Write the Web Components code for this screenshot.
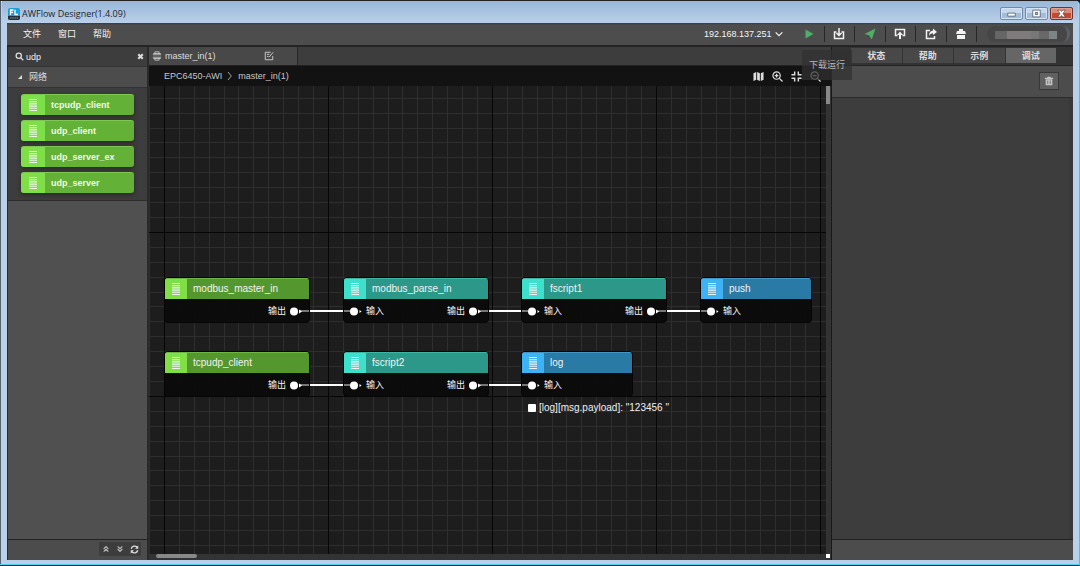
<!DOCTYPE html>
<html lang="zh-CN">
<head>
<meta charset="utf-8">
<title>AWFlow Designer(1.4.09)</title>
<style>
  html, body { margin: 0; height: 100%; background: #10171c; overflow: hidden; }
  body { font: 9px/14px "Liberation Sans", "Noto Sans CJK SC", sans-serif; color: #ddd;
    --bar: #4c4c4c; --panel: #3d3d3d; --line: #202020; }
</style>
</head>
<body>
<app-window heading="AWFlow Designer(1.4.09)">
  <menu-bar slot="menu"></menu-bar>
  <node-palette></node-palette>
  <flow-editor></flow-editor>
  <side-panel></side-panel>
</app-window>

<script>
const define = (name, html, init) => {
  const template = document.createElement('template');
  template.innerHTML = html;
  customElements.define(name, class extends HTMLElement {
    constructor() {
      super();
      this.attachShadow({ mode: 'open' }).append(template.content.cloneNode(true));
    }
    connectedCallback() { if (init) init(this, this.shadowRoot); }
  });
};

const reset = `
  *, *::before { box-sizing: border-box; }
  button, input, select { font: inherit; color: inherit; background: none; border: 0; margin: 0; padding: 0; border-radius: 0; outline: 0; }
  button { display: flex; align-items: center; justify-content: center; }
`;

const S = 'fill="none" stroke="currentColor"';
const icons = {
  logo: '<rect width="12" height="12" rx="2" fill="#1b9fdc"/><path d="M0 8h12v2a2 2 0 0 1-2 2H2a2 2 0 0 1-2-2z" fill="#22313c"/><path d="M2.500 7V2h3M2.500 4.300h2.500M7 1.700V6.500h3" fill="none" stroke="#fff" stroke-width="1.300"/><path d="M2 10h8" stroke="#8b99a3" stroke-dasharray="1.500 .7"/>',
  play: '<path d="M2.500 1.500v9l8-4.500z" fill="currentColor"/>',
  download: `<path d="M3.500 4H1.500v6.500h9V4h-2M6 0v7M3.500 5 6 7.500 8.500 5" ${S} stroke-width="1.500"/>`,
  plane: '<path d="M11.500.5.5 6l4.500 1.200L7.800 11.500z" fill="currentColor"/>',
  publish: `<path d="M3.500 7.500H1.500V1.500h9v6h-2" ${S} stroke-width="1.500"/><path d="M6 3.500 3 7h2v4h2V7h2z" fill="currentColor"/>`,
  share: `<path d="M5 2.500H1.500v8h8V8" ${S} stroke-width="1.500"/><path d="M8 .5 12 4 8 7V5.200C6 5.200 5 6 4 8c0-3.500 1.500-5.200 4-5.500z" fill="currentColor"/>`,
  store: '<path d="M4 1h4v2h2l1 3H1l1-3h2zM2 7h8v4H2z" fill="currentColor"/>',
  chevron: `<path d="M2 4l4 4 4-4" ${S} stroke-width="1.400"/>`,
  right: `<path d="M3 0l5 6-5 6" ${S} stroke-width="1.200"/>`,
  search: `<circle cx="5" cy="5" r="3.500" ${S} stroke-width="1.700"/><path d="M7.500 7.500l3.500 3.500" ${S} stroke-width="1.800"/>`,
  close: `<path d="M3 3l6 6M9 3l-6 6" ${S} stroke-width="2.800"/>`,
  caret: '<path d="M9 3v6H3z" fill="currentColor"/>',
  flow: `<path d="M3.500 3V1h5v2M3.500 9v2h5V9M1 4.500h10M1 7.500h10M1.500 3h9M1.500 9h9" ${S} stroke-width=".9"/>`,
  note: `<path d="M8 1.500H1.500v9h9V6M3.500 4h3M3.500 6.500h2M6 7.500l5-6" ${S}/>`,
  map: '<path d="M.5 2.500 3.500 1v8.500L.5 11zM4.500 1l3 1.500V11l-3-1.500zM8.500 2.500l3-1.500v8.500l-3 1.500z" fill="currentColor"/>',
  zoomin: `<circle cx="5" cy="5" r="4" ${S} stroke-width="1.300"/><path d="M8 8l3.500 3.500M3 5h4M5 3v4" ${S} stroke-width="1.400"/>`,
  zoomout: `<circle cx="5" cy="5" r="4" ${S} stroke-width="1.300"/><path d="M8 8l3.500 3.500M3 5h4" ${S} stroke-width="1.400"/>`,
  fit: `<path d="M4 .5V4H.5M8 .5V4h3.500M.5 8H4v3.500M11.500 8H8v3.500" ${S} stroke-width="1.600"/>`,
  trash: '<path d="M4 1h4v1h3v1.500H1V2h3zM2 4h8v7H2z" fill="currentColor"/><path d="M4.500 5.500v4M7.500 5.500v4" stroke="#666"/>',
  up: `<path d="M2.500 6 6 2.500 9.500 6M2.500 10 6 6.500 9.500 10" ${S} stroke-width="1.700"/>`,
  down: `<path d="M2.500 2 6 5.500 9.500 2M2.500 6 6 9.500 9.500 6" ${S} stroke-width="1.700"/>`,
  refresh: `<path d="M1.700 5A4.500 4.500 0 0 1 9.500 3M10.300 7A4.500 4.500 0 0 1 2.500 9" ${S} stroke-width="1.700"/><path d="M11 .5V5H6.800zM1 11.500V7h4.200z" fill="currentColor"/>`,
  lines: `<path d="M2 .5h8M2 2.700h8M2 4.900h8M2 7.100h8M2 9.300h8M2 11.500h8" ${S} stroke-width="1.100"/>`,
  min: '<path d="M1 5.500h10v4H1z" fill="#fff" stroke="#4a5666"/>',
  max: '<path d="M1 1.500h10v9H1z" fill="#fff" stroke="#4a5666"/><path d="M4.500 4.500h3v3h-3z" fill="#9fb6d0" stroke="#4a5666"/>',
  exit: '<path d="M1 1.500h3.500L6 3.300l1.500-1.800H11L8 6l3 4.500H7.500L6 8.700l-1.500 1.800H1L4 6z" fill="#fff" stroke="#5c3434" stroke-width=".8"/>',
};

define('ui-icon', `<style>
  :host { display: inline-block; width: 12px; height: 12px; flex: none; }
  svg { display: block; width: 100%; height: 100%; overflow: visible; }
</style><svg viewBox="0 0 12 12" aria-hidden="true"></svg>`,
(host, root) => { root.querySelector('svg').innerHTML = icons[host.getAttribute('name')] || ''; });

define('app-window', `<style>${reset}
  :host { display: flex; flex-direction: column; height: 100vh; box-sizing: border-box; padding: 0 6px 5px 7px;
    background: #b9d0ea; border: 1px solid #35c9e8; border-width: 1px 1px 1px 0; border-top-color: #222; border-bottom-color: #16323f;
    border-radius: 0 5px 0 0; box-shadow: inset 0 -1px #4ed0ee, inset 1px 0 #56636f, inset 0 1px #dfeaf6; }
  header { display: flex; align-items: center; flex: none; height: 22px; margin: 0 -5px; padding: 3px 5px 0 6px; gap: 2px;
    background: linear-gradient(#9ab7d7, #b9d0ea); color: #1c2530; font: 9px/16px "Open Sans", "Noto Sans", sans-serif; }
  h1 { font: inherit; margin: 0; flex: 1; }
  .controls { display: flex; gap: 2px; }
  .controls button { width: 23px; height: 13px; border: 1px solid #6f8ba9; border-radius: 2px;
    background: linear-gradient(#c5d7ea 50%, #a3bdd9 50%); box-shadow: inset 0 0 0 1px #d6e4f2; }
  .controls .exit { background: linear-gradient(#d98b7c 50%, #c24a30 50%); border-color: #6d3431; box-shadow: inset 0 0 0 1px #e0a094; }
  .controls ui-icon { width: 9px; height: 9px; }
  main { display: flex; flex: 1; min-height: 0; border-top: 2px solid #242424; background: #2a2a2a; }
  ::slotted(flow-editor) { flex: 1; min-width: 0; }
</style>
<header><ui-icon name="logo"></ui-icon><h1></h1>
  <div class="controls"><button aria-label="最小化"><ui-icon name="min"></ui-icon></button><button aria-label="最大化"><ui-icon name="max"></ui-icon></button><button class="exit" aria-label="关闭"><ui-icon name="exit"></ui-icon></button></div>
</header>
<slot name="menu"></slot>
<main><slot></slot></main>`,
(host, root) => { root.querySelector('h1').textContent = host.getAttribute('heading'); });

define('menu-bar', `<style>${reset}
  :host { display: flex; align-items: center; flex: none; height: 22px; background: linear-gradient(#3c3c3c, #4d4d4d 2px); padding: 0 3px 0 16px; color: #f2f2f2; }
  nav { display: flex; gap: 17px; flex: 1; }
  select { appearance: none; width: 70px; height: 16px; }
  label { display: flex; align-items: center; margin-right: 10px; color: #f4f4f4; }
  label ui-icon { width: 10px; height: 10px; }
  .tools { display: flex; width: 183px; height: 16px; }
  .tools button { flex: 1; border-right: 1px solid #262626; }
  .go { color: #4fae68; }
  .user { width: 83px; height: 16px; margin-left: 10px; border-radius: 8px; background: #464646; border-right: 3px solid #59606a; padding: 5px 10px 3px 8px; }
  .user i { display: block; width: 100%; height: 8px; background: linear-gradient(90deg, #666 12px, #7f7a7c 12px 36px, #777 36px 44px, #686868 44px 54px, #7c8484 54px 62px, #6d6d6d 62px); }
</style>
<nav><button>文件</button><button>窗口</button><button>帮助</button></nav>
<label><select aria-label="设备地址"><option>192.168.137.251</option></select><ui-icon name="chevron"></ui-icon></label>
<div class="tools">
  <button class="go" aria-label="下载运行"><ui-icon name="play"></ui-icon></button>
  <button aria-label="下载"><ui-icon name="download"></ui-icon></button>
  <button class="go" aria-label="发送"><ui-icon name="plane"></ui-icon></button>
  <button aria-label="发布"><ui-icon name="publish"></ui-icon></button>
  <button aria-label="分享"><ui-icon name="share"></ui-icon></button>
  <button aria-label="商店"><ui-icon name="store"></ui-icon></button>
</div>
<button class="user" aria-label="用户"><i></i></button>`);

define('palette-item', `<style>
  :host { display: flex; align-items: center; height: 21px; border-radius: 3px; overflow: hidden; background: #64b137; color: #eefae6;
    font-weight: bold; border-top: 1px solid #7cc850; box-sizing: border-box; box-shadow: 0 2px 4px #2a2a2a; }
  span { display: flex; align-self: stretch; align-items: center; justify-content: center; width: 24px; margin-right: 6px; background: #7fdf48; }
</style><span><ui-icon name="lines"></ui-icon></span><slot></slot>`);

define('node-palette', `<style>${reset}
  :host { display: flex; flex-direction: column; flex: none; width: 142px; box-sizing: border-box; border: 1px solid #2a2a2a; border-width: 0 2px 0 1px; background: var(--panel); }
  .search { display: flex; align-items: center; height: 19px; padding: 0 2px 0 7px; gap: 2px; }
  .search input { flex: 1; min-width: 0; color: #f0f0f0; }
  .search ui-icon { width: 9px; height: 9px; }
  h2 { display: flex; align-items: center; gap: 5px; height: 22px; margin: 0; padding-left: 8px; background: var(--bar); border: 1px solid #333; border-width: 1px 0; font: inherit; }
  h2 ui-icon { width: 8px; height: 8px; }
  .items { display: flex; flex-direction: column; gap: 5px; padding: 6px 13px 7px; border-bottom: 1px solid #2c2c2c; }
  .rest { flex: 1; background: #505050; }
  footer { display: flex; justify-content: flex-end; padding: 2px 6px 4px; background: var(--bar); border-top: 1px solid #222; }
  footer button { width: 14px; height: 14px; background: var(--panel); }
  footer ui-icon { width: 8px; height: 8px; color: #bbb; }
  footer button:last-child ui-icon { width: 9px; height: 9px; color: #ddd; }
</style>
<div class="search"><ui-icon name="search"></ui-icon><input aria-label="搜索" value="udp"><button aria-label="清除"><ui-icon name="close"></ui-icon></button></div>
<h2><ui-icon name="caret"></ui-icon>网络</h2>
<div class="items"><palette-item>tcpudp_client</palette-item><palette-item>udp_client</palette-item><palette-item>udp_server_ex</palette-item><palette-item>udp_server</palette-item></div>
<div class="rest"></div>
<footer><button aria-label="全部收起"><ui-icon name="up"></ui-icon></button><button aria-label="全部展开"><ui-icon name="down"></ui-icon></button><button aria-label="刷新"><ui-icon name="refresh"></ui-icon></button></footer>`);

define('flow-node', `<style>
  :host { display: block; box-sizing: border-box; width: 146px; height: 46px; border: 1px solid #050505; border-radius: 4px; overflow: hidden; background: rgba(10, 10, 10, .93); }
  :host([color=green]) { --head: #55972f; --badge: #7fdf45; --edge: #6ab83f; }
  :host([color=teal]) { --head: #2b9889; --badge: #3de0cb; --edge: #3bb5a4; }
  :host([color=blue]) { --head: #2a7aa6; --badge: #3eb3f3; --edge: #3f97c8; }
  :host([color=blue]) { width: 112px; }
  header { display: flex; align-items: center; height: 20px; background: var(--head); border-top: 1px solid var(--edge); font-size: 10px; color: #f2f2f2; gap: 6px; }
  header span { display: flex; align-self: stretch; align-items: center; justify-content: center; width: 22px; background: var(--badge); }
  .ports { display: flex; align-items: center; height: 24px; color: #f5f5f5; }
  .in, .out { display: none; align-items: center; gap: 3px; position: relative; }
  :host([in]) .in, :host([out]) .out { display: flex; }
  .in { padding-left: 5px; }
  .out { margin-left: auto; padding-right: 6px; }
  svg { position: relative; width: 14px; height: 9px; }
  .wire { position: absolute; top: 6px; height: 2px; width: 6px; background: #777; }
  .in .wire { left: 0; }
  .out .wire { right: 0; width: 10px; }
</style>
<header><span><ui-icon name="lines"></ui-icon></span><slot></slot></header>
<div class="ports">
  <div class="in"><i class="wire"></i><svg viewBox="0 0 14 9"><circle cx="5" cy="4.500" r="4" fill="#fff"/><path d="M10.500 3l2 1.500-2 1.500z" fill="#fff"/></svg>输入</div>
  <div class="out">输出<i class="wire"></i><svg viewBox="0 0 14 9"><circle cx="5" cy="4.500" r="4" fill="#fff"/><path d="M10 2.500l3 2-3 2z" fill="#fff"/></svg></div>
</div>`);

define('flow-canvas', `<style>
  :host { display: block; position: relative; overflow: hidden; background: #1d1d1d; }
  svg { position: absolute; inset: 0; width: 100%; height: 100%; }
  flow-node, output { position: absolute; }
  output { display: flex; align-items: center; gap: 3px; color: #f0f0f0; white-space: pre; font-size: 10px; }
  output::before { content: ""; width: 8px; height: 8px; border-radius: 1px; background: #fff; }
</style>
<svg aria-hidden="true">
  <defs><pattern id="grid" x="15" y="146" width="164" height="164" patternUnits="userSpaceOnUse"><path id="minor" stroke="#2e2e2e"/><path d="M.5 0v164M0 .5h164" stroke="#060606"/></pattern></defs>
  <rect width="100%" height="100%" fill="url(#grid)"/>
  <path d="M160 225h34M339 225h34M518 225h33M160 299h34M339 299h34" stroke="#fff" stroke-width="2"/>
</svg>
<flow-node color="green" out style="left:15px;top:191px">modbus_master_in</flow-node>
<flow-node color="teal" in out style="left:194px;top:191px">modbus_parse_in</flow-node>
<flow-node color="teal" in out style="left:372px;top:191px">fscript1</flow-node>
<flow-node color="blue" in style="left:551px;top:191px">push</flow-node>
<flow-node color="green" out style="left:15px;top:265px">tcpudp_client</flow-node>
<flow-node color="teal" in out style="left:194px;top:265px">fscript2</flow-node>
<flow-node color="blue" in style="left:372px;top:265px">log</flow-node>
<output style="left:379px;top:315px">[log][msg.payload]: "123456 "</output>`,
(host, root) => {
  const stops = [15, 30, 45, 60, 74, 89, 104, 119, 134, 149];
  root.querySelector('#minor').setAttribute('d', stops.map(n => `M${n}.5 0v164M0 ${n}.5h164`).join(''));
});

define('flow-editor', `<style>${reset}
  :host { display: grid; grid-template: 19px 20px 1fr 6px / 1fr 5px; position: relative; background: #333; border-right: 1px solid #191919; }
  .tabs, .crumbs { grid-column: 1 / 3; display: flex; align-items: center; }
  .tabs { background: var(--panel); border-bottom: 1px solid #222; }
  .tab { display: flex; align-items: center; align-self: stretch; width: 149px; gap: 3px; padding: 0 23px 0 3px; background: #484848; border-right: 1px solid #262626; }
  .tab span { flex: 1; text-align: left; }
  .tab ui-icon { width: 10px; height: 10px; }
  .crumbs { background: #121212; padding: 0 10px 0 15px; gap: 4px; color: #c6c6c6; }
  .crumbs a { color: inherit; text-decoration: none; }
  .crumbs > ui-icon { width: 8px; height: 8px; }
  .zoom { display: flex; gap: 8px; margin-left: auto; color: #ddd; }
  .zoom ui-icon { display: block; width: 11px; height: 11px; }
  .v i { display: block; width: 4px; height: 18px; background: #888; }
  .h { padding-left: 7px; display: flex; }
  .h i { width: 41px; height: 4px; border-radius: 2px; background: #888; }
  .corner { width: 4px; height: 4px; background: #fff; }
  .tip { position: absolute; z-index: 2; right: -21px; top: 3px; padding: 8px 7px; background: rgba(48, 48, 50, .72); color: #b4b4b4; white-space: nowrap; }
</style>
<div class="tabs"><button class="tab"><ui-icon name="flow"></ui-icon><span>master_in(1)</span><ui-icon name="note"></ui-icon></button></div>
<div class="crumbs"><a href="#">EPC6450-AWI</a><ui-icon name="right"></ui-icon><a href="#">master_in(1)</a>
  <div class="zoom"><button aria-label="地图"><ui-icon name="map"></ui-icon></button><button aria-label="放大"><ui-icon name="zoomin"></ui-icon></button><button aria-label="适应"><ui-icon name="fit"></ui-icon></button><button aria-label="缩小"><ui-icon name="zoomout"></ui-icon></button></div></div>
<flow-canvas></flow-canvas><div class="v"><i></i></div>
<div class="h"><i></i></div><div class="corner"></div>
<div class="tip" role="tooltip">下载运行</div>`);

define('side-panel', `<style>${reset}
  :host { display: flex; flex-direction: column; flex: none; width: 241px; background: var(--panel); }
  .tabs { display: flex; gap: 1px; height: 19px; padding: 1px 17px 2px 19px; border-bottom: 1px solid #242424; background: #333; }
  .tabs button { flex: 1; background: #484848; font-weight: bold; }
  .tabs .on { background: #666; }
  .bar { display: flex; justify-content: flex-end; align-items: center; height: 32px; padding: 0 14px 1px; background: var(--bar); border-bottom: 1px solid #2c2c2c; }
  .bar button { width: 20px; height: 18px; background: #606060; border: 1px solid #383838; color: #c4c4c4; }
  .bar ui-icon { width: 10px; height: 10px; }
  .log { flex: 1; border-right: 4px solid #383838; }
  footer { height: 21px; background: var(--bar); border-top: 1px solid #222; }
</style>
<div class="tabs" role="tablist"><button role="tab">状态</button><button role="tab">帮助</button><button role="tab">示例</button><button role="tab" class="on" aria-selected="true">调试</button></div>
<div class="bar"><button aria-label="清空"><ui-icon name="trash"></ui-icon></button></div>
<div class="log"></div><footer></footer>`);
</script>
</body>
</html>
